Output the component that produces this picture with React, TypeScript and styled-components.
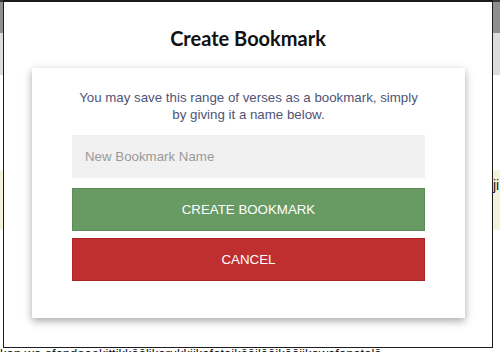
import React, { useState } from 'react'
import styled, { createGlobalStyle } from 'styled-components'

const GlobalStyle = createGlobalStyle`
    html, body {
        margin: 0;
        padding: 0;
        width: 500px;
        height: 352px;
        overflow: hidden;
        background: #ffffff;
    }
`;

const Page = styled.div`
    position: relative;
    width: 500px;
    height: 352px;
    overflow: hidden;
    font-family: "Liberation Sans", Arial, sans-serif;
`;

const TopStrip = styled.div`
    height: 2px;
    background-color: #2e3b2f;
`;

const NavBar = styled.div`
    height: 31px;
    background-color: #8f8f8f;
`;

const SubBar = styled.div`
    height: 42px;
    background-color: #dcdcdc;
`;

const Content = styled.div`
    padding: 95px 0 0;
`;

const Highlight = styled.div`
    height: 60px;
    background-color: #f4f2dc;
    font-size: 14px;
    line-height: 30px;
    padding-left: 493px;
    color: #111;
    white-space: nowrap;
`;

const Footline = styled.div`
    margin-top: 116px;
    font-size: 13px;
    line-height: 16px;
    color: #111;
    white-space: nowrap;
`;

const Modal = styled.div`
    position: absolute;
    left: 3px;
    top: 0;
    width: 488px;
    height: 345px;
    background-color: #ffffff;
    border: 1px solid #1c1c1c;
    border-top-width: 2px;
    box-sizing: content-box;
    display: flex;
    flex-direction: column;
`;

const Title = styled.h2`
    margin: 23px 0 0;
    text-align: center;
    font-family: Lato, "Open Sans", sans-serif;
    font-weight: 700;
    font-size: 20px;
    line-height: 26px;
    color: #111111;
`;

const Card = styled.div`
    margin: 17px 0 0 28px;
    width: 433px;
    height: 250px;
    box-sizing: border-box;
    padding: 21px 40px 0;
    background-color: #ffffff;
    box-shadow: 0 3px 8px rgba(0, 0, 0, 0.35);
    display: flex;
    flex-direction: column;
`;

const Message = styled.p`
    margin: 0 0 12px;
    text-align: center;
    font-size: 13.3px;
    line-height: 17px;
    color: #4e5577;
`;

const NameInput = styled.input`
    height: 43px;
    box-sizing: border-box;
    border: none;
    outline: none;
    background-color: #f1f1f1;
    padding: 0 13px;
    font-family: "Liberation Sans", Arial, sans-serif;
    font-size: 13.3px;
    color: #333;
    caret-color: #222;

    &::placeholder {
        color: #9a9a9a;
    }
`;

const Button = styled.button<{ $tone: 'ok' | 'cancel' }>`
    height: 43px;
    margin-top: ${p => (p.$tone === 'ok' ? '10px' : '7px')};
    border: 1px solid ${p => (p.$tone === 'ok' ? '#5c8d57' : '#ad2426')};
    background-color: ${p => (p.$tone === 'ok' ? '#689a64' : '#bf2f30')};
    color: #ffffff;
    font-family: "Liberation Sans", Arial, sans-serif;
    font-size: 13.3px;
    text-transform: uppercase;
    cursor: pointer;
`;

export default function App() {
    const [name, setName] = useState('')

    return (
        <Page>
            <GlobalStyle />
            <TopStrip />
            <NavBar />
            <SubBar />
            <Content>
                <Highlight>ji:</Highlight>
                <Footline>kan wa ofandoaekittikkāālikarukkiikafataikāāilāāikāāiikawafanatalā</Footline>
            </Content>
            <Modal>
                <Title>Create Bookmark</Title>
                <Card>
                    <Message>
                        You may save this range of verses as a bookmark, simply by giving it a name below.
                    </Message>
                    <NameInput
                        autoFocus
                        value={name}
                        placeholder="New Bookmark Name"
                        onChange={e => setName(e.target.value)}
                    />
                    <Button $tone="ok">Create Bookmark</Button>
                    <Button $tone="cancel">Cancel</Button>
                </Card>
            </Modal>
        </Page>
    )
}
